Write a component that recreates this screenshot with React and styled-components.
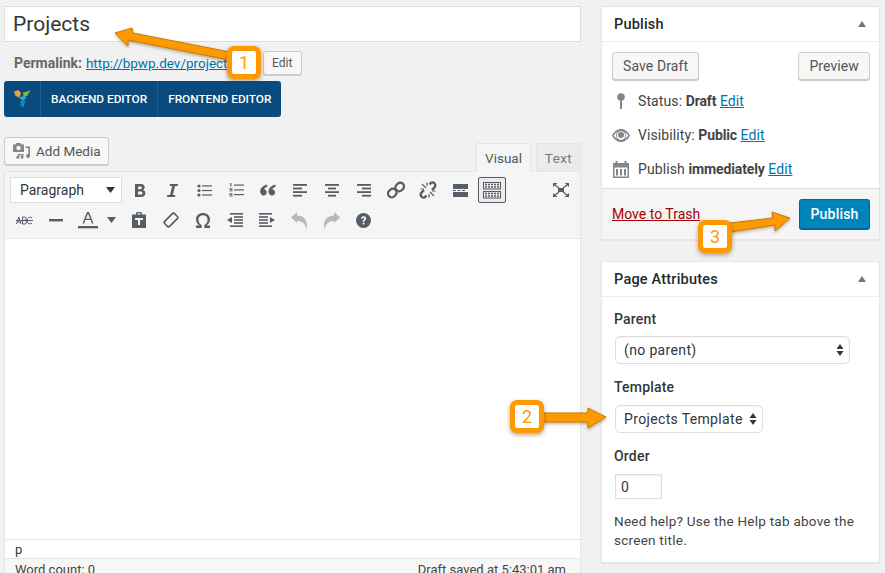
import React from 'react';
import styled, { createGlobalStyle } from 'styled-components';

const Global = createGlobalStyle`
  html, body { margin: 0; padding: 0; background: #f1f1f1; }
  body {
    font-family: Roboto, "Liberation Sans", sans-serif;
    font-size: 14px;
    color: #444;
    -webkit-font-smoothing: antialiased;
  }
  * { box-sizing: border-box; }
`;

const Page = styled.div`
  position: relative;
  width: 885px;
  height: 573px;
  overflow: hidden;
  display: flex;
  align-items: flex-start;
  padding: 6px 5px 0 4px;
`;

const Main = styled.div`
  width: 577px;
  flex: none;
  display: flex;
  flex-direction: column;
`;

const Side = styled.div`
  width: 279px;
  margin-left: 20px;
  flex: none;
  display: flex;
  flex-direction: column;
  gap: 21px;
`;

const TitleInput = styled.input`
  width: 100%;
  height: 36px;
  border: 1px solid #ddd;
  background: #fff;
  padding: 0 8px;
  font: 400 21px Roboto, "Liberation Sans", sans-serif;
  color: #32373c;
  outline: none;
`;

const PermalinkRow = styled.div`
  display: flex;
  align-items: center;
  height: 24px;
  margin-top: 9px;
  padding-left: 10px;
  font-size: 13.5px;
  color: #666;
`;

const PermalinkLabel = styled.strong`
  font-size: 14px;
  font-weight: 700;
  margin-right: 4px;
`;

const Link = styled.a`
  color: ${(p) => p.$color || '#0073aa'};
  text-decoration: underline;
`;

const PermalinkUrl = styled(Link)`
  width: 177px;
  overflow: hidden;
  white-space: nowrap;
`;

const Button = styled.button`
  height: ${(p) => p.$h || 28}px;
  padding: 0 ${(p) => p.$px || 10}px;
  border: 1px solid #ccc;
  border-radius: 3px;
  background: #f7f7f7;
  box-shadow: 0 1px 0 #ccc;
  color: #555;
  font: 400 ${(p) => p.$fs || 14}px Roboto, "Liberation Sans", sans-serif;
  letter-spacing: 0.1px;
  display: inline-flex;
  align-items: center;
  white-space: nowrap;
`;

const ComposerBar = styled.div`
  display: flex;
  align-items: stretch;
  width: 277px;
  height: 36px;
  margin-top: 6px;
  background: #0a4b7f;
  border-radius: 3px;
`;

const ComposerLogo = styled.div`
  width: 36px;
  flex: none;
  display: flex;
  align-items: center;
  justify-content: center;
`;

const ComposerItem = styled.div`
  display: flex;
  align-items: center;
  padding: 0 10px;
  border-left: 1px solid #1c5c91;
  color: #fff;
  font-size: 11.8px;
  font-weight: 500;
  white-space: nowrap;
`;

const EditorHead = styled.div`
  display: flex;
  justify-content: space-between;
  align-items: flex-end;
  margin-top: 20px;
  height: 34px;
`;

const MediaButton = styled(Button)`
  align-self: flex-start;
  gap: 6px;
  width: 105px;
  padding: 0 0 0 8px;
  font-size: 13.5px;
  letter-spacing: 0;
`;

const Tabs = styled.div`
  display: flex;
  gap: 5px;
  margin-bottom: -1px;
  position: relative;
`;

const Tab = styled.div`
  width: ${(p) => p.$w}px;
  height: 29px;
  display: flex;
  align-items: center;
  justify-content: center;
  border: 1px solid #e5e5e5;
  border-bottom-color: ${(p) => (p.$active ? '#f5f5f5' : '#e5e5e5')};
  background: ${(p) => (p.$active ? '#f5f5f5' : '#ebebeb')};
  color: ${(p) => (p.$active ? '#555' : '#777')};
  font-size: 13.5px;
  letter-spacing: ${(p) => (p.$active ? 0 : 0.4)}px;
`;

const EditorBox = styled.div`
  border: 1px solid #e5e5e5;
  background: #fff;
  display: flex;
  flex-direction: column;
`;

const Toolbar = styled.div`
  background: #f5f5f5;
  border-bottom: 1px solid #e5e5e5;
  height: 67px;
  padding: 3px 3px 0 3px;
  display: flex;
  flex-direction: column;
`;

const ToolRow = styled.div`
  display: flex;
  align-items: center;
  height: 30px;
`;

const FormatSelect = styled.div`
  width: 112px;
  height: 26px;
  margin: 0 2px;
  border: 1px solid #ddd;
  background: #fff;
  color: #32373c;
  font-size: 14px;
  letter-spacing: 0;
  padding: 0 6px 0 9px;
  display: flex;
  align-items: center;
  justify-content: space-between;
`;

const Tool = styled.div`
  width: ${(p) => p.$w || 32}px;
  height: 28px;
  flex: none;
  display: flex;
  align-items: center;
  justify-content: center;
  margin-left: ${(p) => p.$ml || 0};
  color: ${(p) => (p.$muted ? '#b4b9be' : '#555d66')};
`;

const ActiveTool = styled.div`
  width: 28px;
  height: 26px;
  border: 1px solid #555d66;
  border-radius: 2px;
  background: #ebebeb;
  display: flex;
  align-items: center;
  justify-content: center;
`;

const Content = styled.div`
  height: 301px;
  background: #fff;
  border-bottom: 1px solid #e5e5e5;
`;

const PathBar = styled.div`
  height: 19px;
  padding: 0 10px;
  line-height: 19px;
  background: #fff;
  border-bottom: 1px solid #e5e5e5;
  font-size: 13px;
  color: #32373c;
`;

const StatusBar = styled.div`
  height: 24px;
  padding: 3px 14px 0 10px;
  display: flex;
  justify-content: space-between;
  background: #f7f7f7;
  font-size: 13px;
  color: #444;
`;

const Card = styled.section`
  background: #fff;
  border: 1px solid #e5e5e5;
  box-shadow: 0 1px 1px rgba(0, 0, 0, 0.04);
`;

const CardHead = styled.div`
  height: 35px;
  padding: 0 12px;
  border-bottom: 1px solid #eee;
  display: flex;
  align-items: center;
  justify-content: space-between;
  color: #23282d;
  font-size: 14.5px;
  font-weight: 500;
  letter-spacing: 0.2px;
`;

const Collapse = styled.span`
  width: 0;
  height: 0;
  border-left: 4.5px solid transparent;
  border-right: 4.5px solid transparent;
  border-bottom: 6px solid #72777c;
  margin-right: 1px;
`;

const PublishActions = styled.div`
  display: flex;
  justify-content: space-between;
  padding: 10px 9px 0 10px;
`;

const MetaList = styled.div`
  display: flex;
  flex-direction: column;
  padding: 4px 10px 2px;
`;

const MetaRow = styled.div`
  display: flex;
  align-items: center;
  height: 34px;
  font-size: 14px;
`;

const MetaIcon = styled.span`
  width: 26px;
  flex: none;
  display: flex;
  justify-content: center;
  padding-right: 8px;
`;

const MetaText = styled.span`
  white-space: pre;
  letter-spacing: 0.1px;
`;

const MetaValue = styled.strong`
  font-weight: 700;
  letter-spacing: -0.12px;
`;

const CardFoot = styled.div`
  height: 51px;
  padding: 0 9px 0 10px;
  background: #f5f5f5;
  border-top: 1px solid #ddd;
  display: flex;
  align-items: center;
  justify-content: space-between;
`;

const PrimaryButton = styled.button`
  width: 71px;
  height: 31px;
  border: 1px solid #006799;
  border-bottom-width: 2px;
  border-radius: 3px;
  background: #0085ba;
  color: #fff;
  font: 500 14px Roboto, "Liberation Sans", sans-serif;
  letter-spacing: 0.2px;
`;

const AttrBody = styled.div`
  padding: 5px 13px 0 12px;
  height: 265px;
  display: flex;
  flex-direction: column;
  align-items: flex-start;
`;

const AttrLabel = styled.label`
  font-size: 14px;
  font-weight: 500;
  color: #32373c;
  letter-spacing: 0.2px;
  line-height: 18px;
  margin-top: ${(p) => p.$mt}px;
`;

const Select = styled.div`
  width: ${(p) => p.$w}px;
  height: 28px;
  margin: ${(p) => p.$mt}px 0 0 1px;
  padding: 0 5px 0 8px;
  border: 1px solid #ddd;
  border-radius: 5px;
  display: flex;
  align-items: center;
  justify-content: space-between;
  font-size: 14px;
  letter-spacing: 0.35px;
  color: #32373c;
  background: #fff;
  box-shadow: inset 0 1px 2px rgba(0, 0, 0, 0.05);
`;

const OrderInput = styled.input`
  width: 47px;
  height: 25px;
  margin: 9px 0 0 1px;
  padding: 0 5px;
  border: 1px solid #ddd;
  font: 400 14px Roboto, "Liberation Sans", sans-serif;
  color: #32373c;
  box-shadow: inset 0 1px 2px rgba(0, 0, 0, 0.07);
  outline: none;
`;

const Help = styled.p`
  margin: 13px 0 0;
  font-size: 13.5px;
  line-height: 19px;
  letter-spacing: 0.25px;
  color: #444;
`;

const Overlay = styled.svg`
  position: absolute;
  left: 0;
  top: 0;
  pointer-events: none;
`;

const Badge = styled.div`
  position: absolute;
  left: ${(p) => p.$x}px;
  top: ${(p) => p.$y}px;
  width: 34px;
  height: 33px;
  background: #fff;
  border: 5px solid #ff9900;
  border-radius: 7px;
  box-shadow: 0 2px 4px rgba(90, 50, 0, 0.45);
  color: #ff9900;
  font-size: 18px;
  display: flex;
  align-items: center;
  justify-content: center;
`;

const Ico = ({ w = 16, h = 16, vb, fill = '#555d66', children }) => (
  <svg width={w} height={h} viewBox={vb || `0 0 ${w} ${h}`} fill={fill}>
    {children}
  </svg>
);

const Lines = ({ rows }) => (
  <Ico w={14} h={13}>
    {rows.map(([x, w], i) => (
      <rect key={i} x={x} y={i * 3.6} width={w} height="1.8" />
    ))}
  </Ico>
);

const BoldIcon = () => (
  <Ico w={14} h={15}>
    <path fillRule="evenodd" d="M2 1h6c2.4 0 3.7 1.3 3.7 3.3 0 1.3-.7 2.3-1.7 2.8 1.4.4 2.4 1.5 2.4 3.2 0 2.4-1.7 3.7-4.3 3.700H2zM5 3.400v2.800h2.400c1 0 1.500-.6 1.500-1.400s-.5-1.400-1.500-1.400zm0 5v3.200h2.800c1.100 0 1.700-.6 1.700-1.600s-.6-1.600-1.700-1.600z" />
  </Ico>
);

const ItalicIcon = () => (
  <Ico w={14} h={15}>
    <path d="M5 1h8l-.4 2H10L7.800 12H10.400L10 14H2l.4-2H5l2.200-9H4.600z" />
  </Ico>
);

const BulletIcon = () => (
  <Ico w={15} h={13}>
    <circle cx="2" cy="2" r="1.600" /><circle cx="2" cy="6.500" r="1.600" /><circle cx="2" cy="11" r="1.600" />
    <rect x="5" y="1.300" width="10" height="1.200" /><rect x="5" y="5.900" width="10" height="1.200" /><rect x="5" y="10.400" width="10" height="1.200" />
  </Ico>
);

const NumberIcon = () => (
  <Ico w={15} h={14}>
    <rect x="1.200" y="0" width="1.200" height="3.600" /><rect x="0.500" y="5" width="3" height="3.400" opacity="0.7" /><rect x="0.500" y="10" width="3" height="3.600" opacity="0.7" />
    <rect x="5" y="1.500" width="10" height="1.200" /><rect x="5" y="6.300" width="10" height="1.200" /><rect x="5" y="11" width="10" height="1.200" />
  </Ico>
);

const QuoteIcon = () => (
  <Ico w={16} h={12}>
    <path d="M7 .5C3.500 1.500 .2 4 .2 7.600c0 2.400 1.500 3.900 3.400 3.900s3.100-1.400 3.100-3.100S5.500 5.600 4.200 5.500C4.500 4.300 5.800 3.200 7.500 2.600zM15.300 .5c-3.500 1-6.800 3.500-6.800 7.100 0 2.400 1.500 3.900 3.400 3.900s3.100-1.400 3.100-3.100-1.200-2.800-2.500-2.900c.3-1.200 1.600-2.300 3.300-2.900z" />
  </Ico>
);

const LinkIcon = () => (
  <svg width="18" height="18" viewBox="0 0 18 18" fill="none" stroke="#555d66" strokeWidth="2.300">
    <rect x="9" y="1.500" width="7.400" height="9" rx="3.600" transform="rotate(45 12.700 6)" />
    <rect x="1.600" y="7.500" width="7.400" height="9" rx="3.600" transform="rotate(45 5.300 12)" />
  </svg>
);

const UnlinkIcon = () => (
  <svg width="18" height="18" viewBox="0 0 18 18" fill="none" stroke="#555d66" strokeWidth="2.300">
    <path d="M10.500 3.400l1-1c1.300-1.300 3-1.300 4 0s1.100 2.800 0 4l-2.500 2.500" />
    <path d="M7.500 14.600l-1 1c-1.300 1.300-3 1.300-4 0s-1.100-2.800 0-4L5 9" />
    <path d="M3 3l4 4M15 15l-4-4M8 1.500V5M1.500 8H5M13 10h3.500M10 13v3.500" strokeWidth="1.200" />
  </svg>
);

const MoreIcon = () => (
  <Ico w={15} h={13}>
    <rect width="15" height="5" /><rect y="8" width="15" height="5" />
    <rect y="6" width="3" height="1" /><rect x="4.500" y="6" width="3" height="1" /><rect x="9" y="6" width="3" height="1" />
  </Ico>
);

const KitchenIcon = () => (
  <svg width="20" height="17" viewBox="0 0 20 17" fill="none" stroke="#555d66" strokeWidth="1">
    <rect x="1.500" y="0.500" width="17" height="6.500" />
    <rect x="1.500" y="9.500" width="17" height="6.500" />
    <path d="M3 2.500h14M3 5h14M3 11.500h14M3 14h14" strokeDasharray="2 1" strokeWidth="1.300" />
  </svg>
);

const FullIcon = () => (
  <svg width="16" height="14" viewBox="0 0 16 14" fill="#555d66">
    <path d="M0 0h4.500L0 4zM16 0v4L11.500 0zM0 14v-4l4.500 4zM16 14h-4.500L16 10z" />
    <path d="M5 5h6v4H5z" />
    <path d="M2 2l4 3M14 2l-4 3M2 12l4-3M14 12l-4-3" stroke="#555d66" strokeWidth="1.200" />
  </svg>
);

const StrikeIcon = () => (
  <svg width="17" height="9" viewBox="0 0 17 9" fill="none" stroke="#555d66" strokeWidth="1">
    <path d="M.5 8L2.800 1 5 8M1.300 6h3M6.500 1v7h2.200a1.800 1.800 0 0 0 0-3.600H6.500M6.500 4.400h2a1.600 1.600 0 0 0 0-3.400h-2M16 2a2.800 2.800 0 0 0-4.700 2.500A2.800 2.800 0 0 0 16 7M0 4.500h17" />
  </svg>
);

const HrIcon = () => (
  <Ico w={14} h={3}>
    <rect width="14" height="2.400" />
  </Ico>
);

const ColorIcon = () => (
  <svg width="20" height="18" viewBox="0 0 20 18" fill="#555d66">
    <path d="M9 1h2l4.500 11.500h-1.600L12.700 9H7.300l-1.200 3.500H4.500zM7.800 7.700h4.400L10 2.700z" />
    <rect y="15" width="20" height="2.300" />
  </svg>
);

const PasteIcon = () => (
  <Ico w={16} h={16}>
    <path fillRule="evenodd" d="M1 2.500h4V1.500C5 .7 5.700 0 6.500 0h3c.8 0 1.500.7 1.500 1.500v1h4V16H1zM6.500 1.200v1.300h3V1.200zM4 6v2h3v5h2V8h3V6z" />
  </Ico>
);

const EraserIcon = () => (
  <svg width="16" height="16" viewBox="0 0 16 16" fill="none" stroke="#555d66" strokeWidth="1.600">
    <rect x="4.500" y="1" width="7" height="14" rx="1.500" transform="rotate(45 8 8)" />
  </svg>
);

const OmegaIcon = () => (
  <svg width="16" height="15" viewBox="0 0 16 15" fill="#555d66">
    <path d="M8 0c4 0 7 2.600 7 6.200 0 2.800-1.500 5-3.700 6.300H15V15H9.300v-3c2-.7 3.300-2.900 3.300-5.500C12.600 4 10.800 2.300 8 2.300S3.400 4 3.400 6.500c0 2.600 1.300 4.800 3.300 5.500v3H1v-2.500h3.700C2.500 11.200 1 9 1 6.200 1 2.600 4 0 8 0z" />
  </svg>
);

const IndentIcon = ({ flip }) => (
  <Ico w={16} h={14}>
    <g transform={flip ? 'matrix(-1 0 0 1 16 0)' : undefined}>
      <rect width="13" height="1.600" />
      <rect y="3.200" width="9" height="1.600" />
      <rect y="6.200" width="9" height="1.600" />
      <rect y="9.200" width="9" height="1.600" />
      <rect y="12.400" width="13" height="1.600" />
      <path d="M11 4l5 3-5 3z" />
    </g>
  </Ico>
);

const UndoIcon = ({ flip }) => (
  <svg width="17" height="17" viewBox="0 0 17 17" fill="#b4b9be">
    <g transform={flip ? 'matrix(-1 0 0 1 17 0)' : undefined}>
      <path d="M0 5.500L6 0v3.500c6 0 10 4 10 10.500 0 1-.3 2-1 3-.3-5-3.500-8-9-8V11z" />
    </g>
  </svg>
);

const HelpIcon = () => (
  <svg width="15" height="15" viewBox="0 0 15 15">
    <circle cx="7.500" cy="7.500" r="7.500" fill="#555d66" />
    <path d="M5 5.700C5 4.300 6 3.300 7.600 3.300s2.600.9 2.600 2.200c0 1.700-1.900 1.900-1.900 3.300H6.700c0-2.200 1.800-2.300 1.800-3.300 0-.5-.4-.8-.9-.8-.6 0-1 .3-1 1z" fill="#fff" />
    <rect x="6.700" y="9.700" width="1.700" height="1.700" fill="#fff" />
  </svg>
);

const Caret = ({ c = '#555d66' }) => (
  <svg width="9" height="6" viewBox="0 0 9 6" fill={c}>
    <path d="M0 0h9L4.500 6z" />
  </svg>
);

const UpDown = () => (
  <svg width="8" height="12" viewBox="0 0 8 12" fill="#32373c">
    <path d="M4 0l3.500 5h-7zM4 12L.5 7h7z" />
  </svg>
);

const MediaIcon = () => (
  <Ico w={17} h={16} fill="#82878c">
    <path fillRule="evenodd" d="M0 1.500h2.500l1-1.500h4l1 1.500H11V9H0zM5.500 2.800a2.200 2.200 0 1 0 0 4.400 2.200 2.200 0 0 0 0-4.400z" />
    <path d="M12.500 3.500H17V13a2 2 0 1 1-1.700-2V5H12.500zM5 11h5.500v3.200a1.500 1.500 0 1 1-1.300-1.500v-.4H6.300v2a1.500 1.500 0 1 1-1.300-1.500z" />
  </Ico>
);

const PinIcon = () => (
  <svg width="8" height="16" viewBox="0 0 8 16" fill="#82878c">
    <circle cx="4" cy="4" r="3.800" />
    <rect x="3" y="6" width="2" height="10" />
  </svg>
);

const EyeIcon = () => (
  <svg width="18" height="13" viewBox="0 0 18 13" fill="#82878c">
    <path fillRule="evenodd" d="M9 0c3.800 0 7 2.600 9 6.500-2 3.900-5.200 6.500-9 6.500S2 10.400 0 6.500C2 2.600 5.200 0 9 0zM9 2.200a4.300 4.300 0 1 0 0 8.600 4.300 4.300 0 0 0 0-8.600zM1.800 6.500C3 8.300 4.300 9.500 5.500 10.200 4.500 9.200 4 8 4 6.500S4.500 3.800 5.500 2.800C4.300 3.500 3 4.700 1.800 6.500zM16.200 6.500C15 4.700 13.700 3.500 12.500 2.800c1 1 1.500 2.200 1.500 3.700s-.5 2.700-1.500 3.700c1.200-.7 2.500-1.900 3.700-3.700z" />
    <circle cx="9" cy="6" r="3" />
  </svg>
);

const CalendarIcon = () => (
  <svg width="16" height="17" viewBox="0 0 16 17" fill="#82878c">
    <path fillRule="evenodd" d="M0 2h2.500V0h2v2h7V0h2v2H16v15H0zM1.500 6.500V15.500H14.500V6.500z" />
    <rect x="3" y="8" width="2" height="6.500" /><rect x="7" y="8" width="2" height="6.500" /><rect x="11" y="8" width="2" height="6.500" />
  </svg>
);

const VcLogo = () => (
  <svg width="17" height="18" viewBox="0 0 17 18">
    <path d="M0 1.500L4.500 0 7 3 5.500 7.500 1.500 6z" fill="#e8a33d" />
    <path d="M9 2.500L16.500 .5 13 6 9.500 7.500z" fill="#86b23c" />
    <path d="M4.500 7.500L10 6l2.500 2.500L8.500 10.500z" fill="#2ca7d6" />
    <path d="M6.500 11l3.500-1 1.500 1.500-2.500 6-2.500-2.500z" fill="#1b87c1" />
  </svg>
);

const Arrow = ({ d }) => (
  <path d={d} fill="#ff9900" stroke="#c97a00" strokeWidth="1" strokeLinejoin="round" filter="url(#arrowShadow)" />
);

const App = () => (
  <Page>
    <Global />
    <Main>
      <TitleInput readOnly value="Projects" />
      <PermalinkRow>
        <PermalinkLabel>Permalink:</PermalinkLabel>
        <PermalinkUrl href="#">http://bpwp.dev/projects/</PermalinkUrl>
        <Button $h={24} $px={8} $fs={12}>Edit</Button>
      </PermalinkRow>
      <ComposerBar>
        <ComposerLogo><VcLogo /></ComposerLogo>
        <ComposerItem>BACKEND EDITOR</ComposerItem>
        <ComposerItem>FRONTEND EDITOR</ComposerItem>
      </ComposerBar>
      <EditorHead>
        <MediaButton>
          <MediaIcon />
          Add Media
        </MediaButton>
        <Tabs>
          <Tab $active $w={55}>Visual</Tab>
          <Tab $w={45}>Text</Tab>
        </Tabs>
      </EditorHead>
      <EditorBox>
        <Toolbar>
          <ToolRow>
            <FormatSelect>Paragraph<Caret c="#32373c" /></FormatSelect>
            <Tool><BoldIcon /></Tool>
            <Tool><ItalicIcon /></Tool>
            <Tool><BulletIcon /></Tool>
            <Tool><NumberIcon /></Tool>
            <Tool><QuoteIcon /></Tool>
            <Tool><Lines rows={[[0, 14], [0, 9], [0, 14], [0, 9]]} /></Tool>
            <Tool><Lines rows={[[0, 14], [3, 8], [0, 14], [3, 8]]} /></Tool>
            <Tool><Lines rows={[[0, 14], [5, 9], [0, 14], [5, 9]]} /></Tool>
            <Tool><LinkIcon /></Tool>
            <Tool><UnlinkIcon /></Tool>
            <Tool><MoreIcon /></Tool>
            <Tool><ActiveTool><KitchenIcon /></ActiveTool></Tool>
            <Tool $ml="auto" $w={32}><FullIcon /></Tool>
          </ToolRow>
          <ToolRow>
            <Tool><StrikeIcon /></Tool>
            <Tool><HrIcon /></Tool>
            <Tool><ColorIcon /></Tool>
            <Tool $w={23} $ml="-4px"><Caret /></Tool>
            <Tool><PasteIcon /></Tool>
            <Tool><EraserIcon /></Tool>
            <Tool><OmegaIcon /></Tool>
            <Tool><IndentIcon flip /></Tool>
            <Tool><IndentIcon /></Tool>
            <Tool $muted><UndoIcon /></Tool>
            <Tool $muted><UndoIcon flip /></Tool>
            <Tool><HelpIcon /></Tool>
          </ToolRow>
        </Toolbar>
        <Content />
        <PathBar>p</PathBar>
        <StatusBar>
          <span>Word count: 0</span>
          <span>Draft saved at 5:43:01 am</span>
        </StatusBar>
      </EditorBox>
    </Main>
    <Side>
      <Card>
        <CardHead>Publish<Collapse /></CardHead>
        <PublishActions>
          <Button>Save Draft</Button>
          <Button $px={10}>Preview</Button>
        </PublishActions>
        <MetaList>
          <MetaRow>
            <MetaIcon><PinIcon /></MetaIcon>
            <MetaText>Status: <MetaValue>Draft</MetaValue> <Link href="#">Edit</Link></MetaText>
          </MetaRow>
          <MetaRow>
            <MetaIcon><EyeIcon /></MetaIcon>
            <MetaText>Visibility: <MetaValue>Public</MetaValue> <Link href="#">Edit</Link></MetaText>
          </MetaRow>
          <MetaRow>
            <MetaIcon><CalendarIcon /></MetaIcon>
            <MetaText>Publish <MetaValue>immediately</MetaValue> <Link href="#">Edit</Link></MetaText>
          </MetaRow>
        </MetaList>
        <CardFoot>
          <Link href="#" $color="#a00">Move to Trash</Link>
          <PrimaryButton>Publish</PrimaryButton>
        </CardFoot>
      </Card>
      <Card>
        <CardHead>Page Attributes<Collapse /></CardHead>
        <AttrBody>
          <AttrLabel $mt={8}>Parent</AttrLabel>
          <Select $w={235} $mt={8}>(no parent)<UpDown /></Select>
          <AttrLabel $mt={14}>Template</AttrLabel>
          <Select $w={148} $mt={9}>Projects Template<UpDown /></Select>
          <AttrLabel $mt={14}>Order</AttrLabel>
          <OrderInput readOnly value="0" />
          <Help>Need help? Use the Help tab above the screen title.</Help>
        </AttrBody>
      </Card>
    </Side>
    <Overlay width="885" height="573">
      <defs>
        <filter id="arrowShadow" x="-10%" y="-30%" width="120%" height="160%">
          <feDropShadow dx="0" dy="1.500" stdDeviation="1.500" floodColor="#5a3200" floodOpacity="0.4" />
        </filter>
      </defs>
      <Arrow d="M115 33L132 28 133 33 230 52 229 60 128 40 128 46z" />
      <Arrow d="M606 417L588 408 588 413 543 413 543 422 588 422 588 428z" />
      <Arrow d="M790 218L772 212 773 218 730 223 730 232 775 225 775 231z" />
    </Overlay>
    <Badge $x={227} $y={46}>1</Badge>
    <Badge $x={510} $y={400}>2</Badge>
    <Badge $x={698} $y={220}>3</Badge>
  </Page>
);

export default App;
